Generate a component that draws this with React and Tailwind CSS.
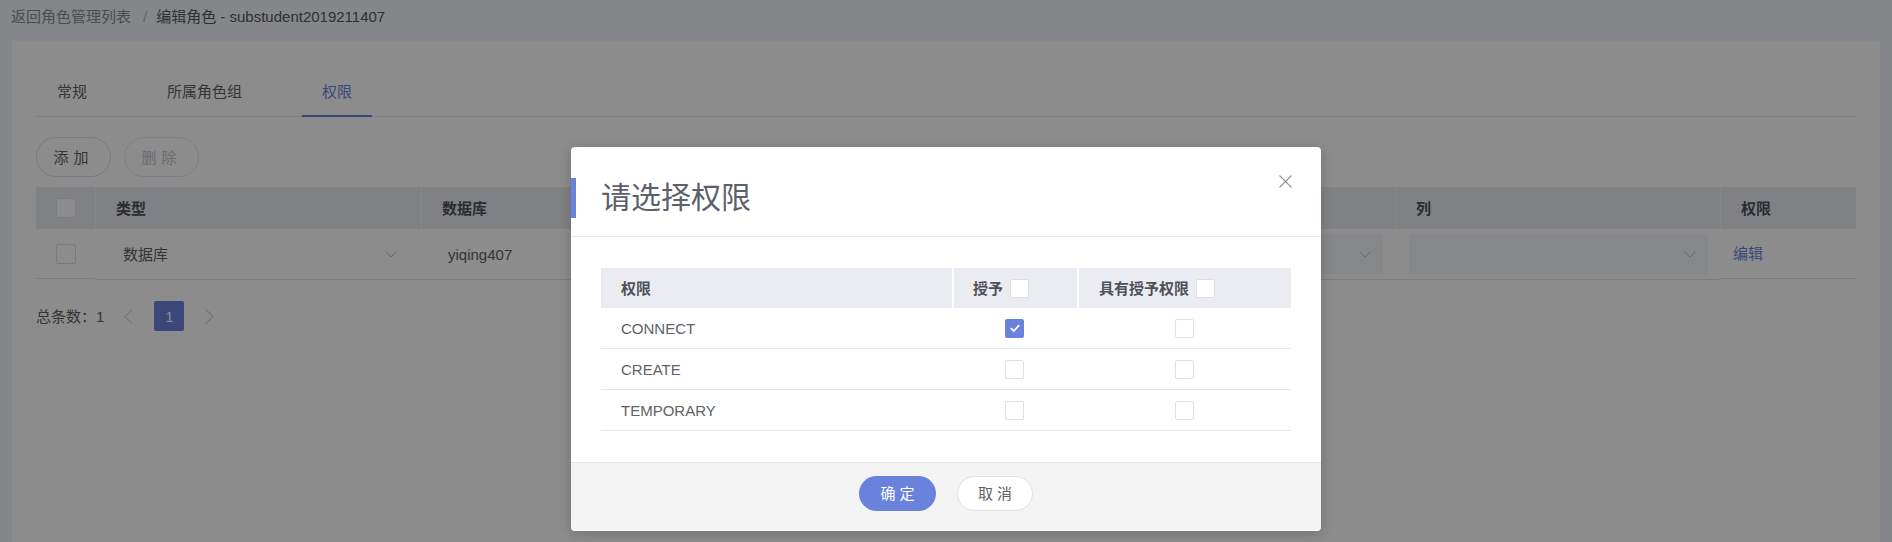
import React from 'react'

const BRAND = 'bg-[#6983dc]'

function Chevron() {
  return (
    <svg width="12" height="7" viewBox="0 0 12 7" fill="none">
      <path d="M0.5 0.5 L6 6 L11.5 0.5" stroke="#c0c4cc" strokeWidth="1" />
    </svg>
  )
}

function CheckBox({ checked, size = 'h-[19px] w-[19px]' }) {
  if (checked) {
    return (
      <span className={`flex ${size} items-center justify-center rounded-[2px] ${BRAND}`}>
        <svg width="14" height="14" viewBox="0 0 14 14" fill="none">
          <path d="M2.8 7.2 L5.8 10 L11.2 4.2" stroke="#fff" strokeWidth="1.8" />
        </svg>
      </span>
    )
  }
  return <span className={`block ${size} rounded-[2px] border border-[#dcdfe6] bg-white`} />
}

// 下拉框: 有值的没有底色, 空的带浅灰底
function SelectCell({ value, filled, pad = 'pl-[14px]' }) {
  return (
    <div className={`flex h-[50px] items-center ${pad} pr-[12px]`}>
      <div className={`flex h-[40px] w-full items-center justify-between pl-[14px] pr-[12px] ${filled ? 'bg-[#f5f6f8]' : ''}`}>
        <span className="text-[#606266]">{value}</span>
        <Chevron />
      </div>
    </div>
  )
}

const headCols = ['类型', '数据库', '模式', '表', '列', '权限']

const perms = [
  { name: 'CONNECT', grant: true, admin: false },
  { name: 'CREATE', grant: false, admin: false },
  { name: 'TEMPORARY', grant: false, admin: false },
]

export default function App() {
  return (
    <div className="relative h-[542px] overflow-hidden bg-[#f2f4fa] font-['Liberation_Sans','Noto_Sans_CJK_SC',sans-serif] text-[15px] leading-none">
      <div className="flex h-[32px] items-center pl-[11px]">
        <span className="text-[#888b92]">返回角色管理列表</span>
        <span className="ml-[12px] mr-[9px] text-[#b4b7bd]">/</span>
        <span className="text-[#555860]">编辑角色 - substudent2019211407</span>
      </div>

      <div className="mx-[12px] mt-[9px] h-[600px] bg-white px-[24px] pt-[26px]">
        <div className="flex h-[50px] gap-[40px] border-b border-[#e4e7ed] pl-[1px]">
          <div className="flex items-center px-[20px] text-[#606266]">常规</div>
          <div className="flex items-center px-[20px] text-[#606266]">所属角色组</div>
          <div className="relative flex items-center px-[20px] text-[#6983dc]">
            权限
            <span className="absolute bottom-[-1px] left-0 right-0 h-[2px] bg-[#6983dc]" />
          </div>
        </div>

        <div className="mt-[20px] flex gap-[13px]">
          <button className="h-[40px] w-[75px] rounded-full border border-[#dcdfe6] bg-white tracking-[5px] text-[#606266]">添加</button>
          <button className="h-[40px] w-[75px] rounded-full border border-[#e4e7ed] bg-white tracking-[5px] text-[#c0c4cc]">删除</button>
        </div>

        <div className="mt-[10px] grid grid-cols-[59px_326px_324px_325px_325px_325px_136px]">
          <div className="flex h-[42px] items-center justify-center bg-[#eaecf1]">
            <CheckBox size="h-[20px] w-[20px]" />
          </div>
          {headCols.map((h) => (
            <div key={h} className="flex h-[42px] items-center border-l border-[#f6f7f9] bg-[#eaecf1] pl-[20px] font-semibold text-[#4e5159]">
              {h}
            </div>
          ))}

          <div className="flex h-[50px] items-center justify-center border-b border-[#e4e4e4]">
            <CheckBox size="h-[20px] w-[20px]" />
          </div>
          <div className="border-b border-[#e4e4e4]"><SelectCell value="数据库" /></div>
          <div className="border-b border-[#e4e4e4]"><SelectCell value="yiqing407" pad="pl-[13px]" /></div>
          <div className="border-b border-[#e4e4e4]"><SelectCell value="" filled /></div>
          <div className="border-b border-[#e4e4e4]"><SelectCell value="" filled /></div>
          <div className="border-b border-[#e4e4e4]"><SelectCell value="" filled /></div>
          <div className="flex h-[50px] items-center border-b border-[#e4e4e4] pl-[13px] text-[#6983dc]">编辑</div>
        </div>

        <div className="mt-[21px] flex h-[30px] items-center text-[#606266]">
          <span>总条数：1</span>
          <svg className="ml-[20px]" width="9" height="15" viewBox="0 0 9 15" fill="none">
            <path d="M8 0.5 L1 7.5 L8 14.5" stroke="#c0c4cc" strokeWidth="1" />
          </svg>
          <span className="ml-[21px] flex h-[30px] w-[30px] items-center justify-center rounded-[2px] bg-[#6983dc] text-white">1</span>
          <svg className="ml-[21px]" width="9" height="15" viewBox="0 0 9 15" fill="none">
            <path d="M1 0.5 L8 7.5 L1 14.5" stroke="#b0b3ba" strokeWidth="1" />
          </svg>
        </div>
      </div>

      <div className="absolute inset-0 flex justify-center bg-black/45 pt-[147px]">
        <div className="h-[384px] w-[750px] rounded-[4px] bg-white shadow-[0_2px_12px_rgba(0,0,0,0.2)]">
          <div className="relative flex h-[90px] items-center border-b border-[#e8e8e8] pl-[30px] pt-[12px]">
            <span className="absolute left-0 top-[31px] h-[40px] w-[5px] bg-[#6983dc]" />
            <span className="text-[30px] text-[#5c606b]">请选择权限</span>
            <svg className="absolute right-[29px] top-[28px]" width="13" height="13" viewBox="0 0 13 13" fill="none">
              <path d="M0.5 0.5 L12.5 12.5 M12.5 0.5 L0.5 12.5" stroke="#909399" strokeWidth="1.1" />
            </svg>
          </div>

          <div className="px-[30px] pb-[31px] pt-[31px]">
            <div className="grid grid-cols-[351px_125px_214px]">
              <div className="flex h-[40px] items-center bg-[#eaecf1] pl-[20px] font-semibold text-[#4e5159]">权限</div>
              <div className="flex h-[40px] items-center border-l-2 border-white bg-[#eaecf1] pl-[19px] font-semibold text-[#4e5159]">
                授予<span className="ml-[7px]"><CheckBox /></span>
              </div>
              <div className="flex h-[40px] items-center border-l-2 border-white bg-[#eaecf1] pl-[20px] font-semibold text-[#4e5159]">
                具有授予权限<span className="ml-[7px]"><CheckBox /></span>
              </div>
              {perms.map((p) => (
                <React.Fragment key={p.name}>
                  <div className="flex h-[41px] items-center border-b border-[#e8e8e8] pl-[20px] text-[#606266]">{p.name}</div>
                  <div className="flex h-[41px] items-center justify-center border-b border-[#e8e8e8]"><CheckBox checked={p.grant} /></div>
                  <div className="flex h-[41px] items-center justify-center border-b border-[#e8e8e8]"><CheckBox checked={p.admin} /></div>
                </React.Fragment>
              ))}
            </div>
          </div>

          <div className="flex h-[68px] justify-center gap-[21px] rounded-b-[4px] border-t border-[#e4e4e4] bg-[#f4f4f5] pt-[13px]">
            <button className="h-[35px] w-[77px] rounded-full bg-[#6983dc] pl-[4px] tracking-[4px] text-white">确定</button>
            <button className="h-[35px] w-[76px] rounded-full border border-[#dcdfe6] bg-white pl-[4px] tracking-[4px] text-[#606266]">取消</button>
          </div>
        </div>
      </div>
    </div>
  )
}
